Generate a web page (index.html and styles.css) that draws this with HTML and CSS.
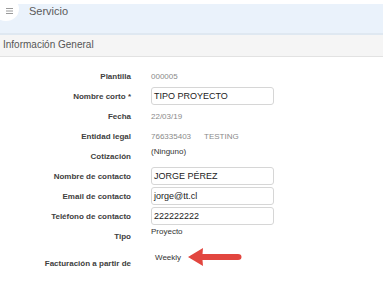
FILE: index.html
```html
<!DOCTYPE html>
<html lang="es">
<head>
<meta charset="utf-8">
<title>Servicio</title>
<link rel="stylesheet" href="styles.css">
</head>
<body>
<div class="page">
  <header class="topbar">
    <span class="menu-btn">
      <svg width="7" height="6" viewBox="0 0 7 6"><path d="M0 0.5H7M0 3H7M0 5.5H7" stroke="#9a9a9a" stroke-width="1"/></svg>
    </span>
    <span class="title">Servicio</span>
  </header>
  <div class="section-head">Información General</div>
  <div class="form">
    <div class="row"><span class="label shift">Plantilla</span><span class="value muted">000005</span></div>
    <div class="row"><span class="label">Nombre corto *</span><span class="input">TIPO PROYECTO</span></div>
    <div class="row"><span class="label">Fecha</span><span class="value muted">22/03/19</span></div>
    <div class="row"><span class="label">Entidad legal</span><span class="value muted">766335403<span class="gap"></span>TESTING</span></div>
    <div class="row raised"><span class="label">Cotización</span><span class="value">(Ninguno)</span></div>
    <div class="row"><span class="label">Nombre de contacto</span><span class="input">JORGE PÉREZ</span></div>
    <div class="row"><span class="label">Email de contacto</span><span class="input">jorge@tt.cl</span></div>
    <div class="row"><span class="label">Teléfono de contacto</span><span class="input">222222222</span></div>
    <div class="row raised"><span class="label">Tipo</span><span class="value">Proyecto</span></div>
    <div class="row raised last"><span class="label">Facturación a partir de</span><span class="value indent">Weekly</span>
      <svg class="arrow" width="56" height="22" viewBox="0 0 56 22"><path d="M1 11 L16 2 L15.5 8 L51 8 Q54.5 8 54.5 11 Q54.5 14 51 14 L15.5 14 L16 20 Z" fill="#e2463f"/></svg>
    </div>
  </div>
</div>
</body>
</html>
```
FILE: styles.css
```css
* { box-sizing: border-box; }
html, body { margin: 0; padding: 0; background: #fff; }
body { font-family: "Liberation Sans", Arial, sans-serif; color: #333; }
.page { width: 383px; padding-top: 4px; }
.topbar {
  position: relative;
  height: 31px;
  background: #eaf2fb;
  border-bottom: 2px solid #dfe8f1;
  display: flex;
  align-items: flex-start;
  padding-left: 29px;
}
.menu-btn {
  position: absolute;
  left: -7px;
  top: -7px;
  width: 26px;
  height: 24px;
  border-radius: 50%;
  background: #fff;
  display: flex;
  align-items: center;
  justify-content: center;
  padding-left: 7px;
  padding-top: 4px;
}
.title { font-size: 11px; color: #5a5a5a; line-height: 14px; }
.section-head {
  height: 22px;
  background: #f5f5f5;
  border-bottom: 1px solid #e2e2e2;
  font-size: 10px;
  color: #555;
  padding-left: 3px;
  line-height: 20px;
}
.form { padding-top: 9px; }
.row {
  display: flex;
  align-items: center;
  height: 20px;
}
.label {
  width: 131px;
  text-align: right;
  font-size: 8px;
  font-weight: bold;
  color: #404040;
  flex: none;
}
.label.shift { margin-right: -9px; }
.shift + .value { margin-left: 29px; }
.value { margin-left: 20px; font-size: 8px; color: #333; }
.value.muted { color: #8a8a8a; }
.gap { display: inline-block; width: 13px; }
.input {
  margin-left: 20px;
  width: 123px;
  height: 18px;
  border: 1px solid #d6d6d6;
  border-radius: 3px;
  font-size: 9px;
  color: #222;
  line-height: 16px;
  padding-left: 2px;
}
.row.raised { align-items: flex-start; }
.row.raised .label { padding-top: 6px; }
.row.raised .value { padding-top: 1px; }
.row.last { height: 26px; margin-top: 11px; }
.row.last .label { padding-top: 2px; }
.row.last .value { padding-top: 0; margin-top: -4px; }
.indent { margin-left: 24px; }
.arrow { margin-left: 6px; margin-top: -11px; }
```
